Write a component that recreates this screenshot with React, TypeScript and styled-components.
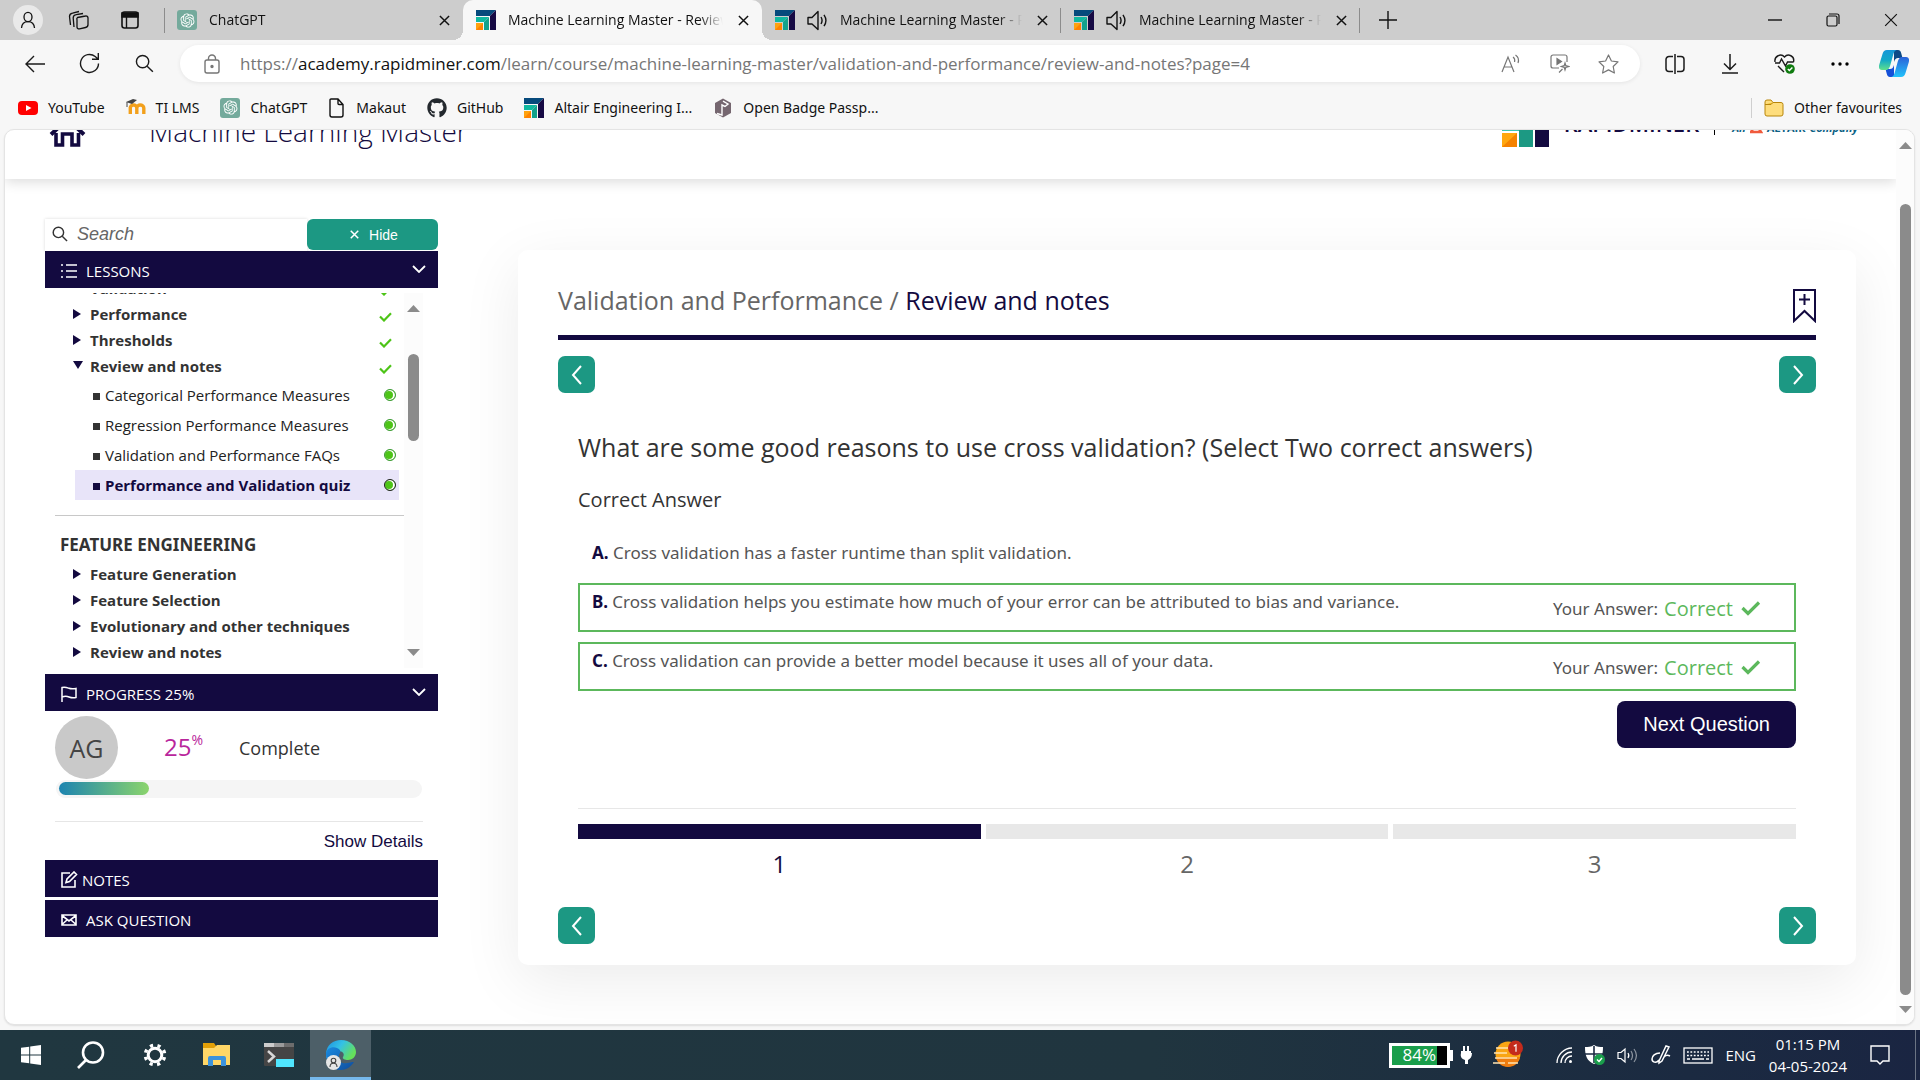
import React from 'react';
import styled, { createGlobalStyle, css } from 'styled-components';
import { RiOpenaiFill } from 'react-icons/ri';
import { FaGithub } from 'react-icons/fa';

const navy = '#130a40';
const teal = '#1c9883';
const sans = '"Open Sans", "Noto Sans", sans-serif';
const noto = '"Noto Sans", "Open Sans", sans-serif';
const arial = '"Liberation Sans", Arial, sans-serif';

const Global = createGlobalStyle`
  *, *::before, *::after { box-sizing: border-box; }
  body { margin: 0; overflow: hidden; font-family: ${sans}; color: #333; }
  button { border: 0; padding: 0; background: none; font: inherit; color: inherit; cursor: pointer; }
  a { color: inherit; text-decoration: none; }
  h1, h2, h3, p, ul, ol { margin: 0; padding: 0; font-weight: 400; }
  ul, ol { list-style: none; }
  svg { display: block; flex: none; }
`;

const Screen = styled.div`
  display: flex;
  flex-direction: column;
  height: 100vh;
  background: #f7f7f7;
`;

/* ---------- Browser chrome ---------- */

const TabStrip = styled.header`
  display: flex;
  height: 40px;
  background: #cdcdcd;
  color: #111;
  font-size: 14px;
`;
const StripTools = styled.div`
  display: flex;
  align-items: center;
  width: 164px;
  padding-left: 13px;
  gap: 23px;
`;
const ProfileButton = styled.button`
  display: grid;
  place-items: center;
  width: 30px;
  height: 30px;
  border-radius: 50%;
  background: #e9e9e9;
`;
const IconButton = styled.button`
  display: grid;
  place-items: center;
`;
const StripIcon = styled(IconButton)`
  width: 24px;
  height: 30px;
  & + & { margin-left: 5px; }
`;
const Tab = styled.div<{ $active?: boolean; $line?: 'left' | 'right' }>`
  position: relative;
  display: flex;
  align-items: center;
  flex: 0 1 299px;
  min-width: 0;
  padding: 0 9px 0 13px;
  gap: 12px;
  ${p => p.$active && css`
    background: #f7f7f7;
    border-radius: 10px 10px 0 0;
    &::before, &::after {
      content: '';
      position: absolute;
      bottom: 0;
      width: 10px;
      height: 10px;
    }
    &::before { left: -10px; background: radial-gradient(circle at 0 0, transparent 10px, #f7f7f7 10px); }
    &::after { right: -10px; background: radial-gradient(circle at 100% 0, transparent 10px, #f7f7f7 10px); }
  `}
  ${p => p.$line && css`
    &::before {
      content: '';
      position: absolute;
      ${p.$line}: 0;
      top: 8px;
      height: 25px;
      border-left: 1px solid #8c8c8c;
    }
  `}
`;
const TabTitle = styled.span`
  flex: 1;
  min-width: 0;
  overflow: hidden;
  white-space: nowrap;
  line-height: 24px;
  mask-image: linear-gradient(to right, #000 calc(100% - 28px), transparent calc(100% - 4px));
`;
const TabClose = styled(IconButton)`
  width: 20px;
  height: 20px;
  margin-left: -6px;
`;
const NewTab = styled(IconButton)`
  width: 55px;
`;
const WindowControls = styled.div`
  display: flex;
  margin-left: auto;
  button { width: 58px; }
`;

const Toolbar = styled.nav`
  display: flex;
  align-items: center;
  height: 48px;
  padding: 0 0 1px 7px;
  color: #1b1b1b;
`;
const ToolButton = styled(IconButton)`
  width: 55px;
  height: 37px;
  color: #1b1b1b;
`;
const CopilotButton = styled(ToolButton)`
  width: 53px;
`;
const AddressBar = styled.div`
  display: flex;
  align-items: center;
  flex: 1;
  height: 37px;
  margin: 0 7px 0 8px;
  padding: 0 7px 0 23px;
  border-radius: 19px;
  background: #fff;
  box-shadow: 0 1px 4px rgba(0, 0, 0, 0.08);
  color: #767676;
`;
const Url = styled.a`
  flex: 1;
  padding-left: 18px;
  font-size: 17px;
  line-height: 24px;
  white-space: nowrap;
  b { font-weight: 400; color: #111; }
`;
const AddressButton = styled(IconButton)`
  width: 49px;
  height: 37px;
`;

const Favourites = styled.nav`
  display: flex;
  align-items: center;
  height: 41px;
  padding: 0 18px 2px;
  gap: 21px;
  color: #111;
  font-family: ${noto};
  font-size: 14px;
  line-height: 20px;
`;
const Favourite = styled.a`
  display: flex;
  align-items: center;
  gap: 10px;
  white-space: nowrap;
`;
const OtherFavourites = styled(Favourite)`
  margin-left: auto;
  padding-left: 12px;
  border-left: 1px solid #cfcfcf;
`;

/* ---------- Web page ---------- */

const PageFrame = styled.div`
  display: flex;
  flex: 1;
  min-height: 0;
  margin: 0 5px 5px 4px;
  overflow: hidden;
  border: 1px solid #e4e4e4;
  border-radius: 10px;
  background: #fff;
  box-shadow: 0 1px 2px rgba(0, 0, 0, 0.1);
`;
const Page = styled.div`
  flex: 1;
  min-width: 0;
`;
const PageHeader = styled.div`
  display: flex;
  align-items: flex-end;
  height: 49px;
  padding: 0 38px 32px 44px;
  box-shadow: 0 3px 12px rgba(0, 0, 0, 0.14);
  color: ${navy};
`;
const CourseTitle = styled.h1`
  margin-left: 63px;
  font-size: 28px;
  font-weight: 300;
  line-height: 32px;
`;
const Brand = styled.a`
  display: flex;
  align-items: flex-end;
  margin-left: auto;
`;
const BrandName = styled.span`
  margin: 0 17px 12px 15px;
  padding-right: 15px;
  border-right: 1px solid #000;
  font-size: 22px;
  font-weight: 600;
  line-height: 24px;
`;
const BrandTag = styled.span`
  display: flex;
  align-items: center;
  gap: 4px;
  margin-bottom: 8px;
  color: #0d6285;
  font-size: 11px;
  font-weight: 700;
  line-height: 22px;
`;
const Columns = styled.div`
  display: flex;
  align-items: flex-start;
  gap: 80px;
  padding: 40px;
`;

/* Sidebar */

const Sidebar = styled.aside`
  flex: 0 0 393px;
`;
const SearchRow = styled.form`
  display: flex;
  height: 32px;
`;
const SearchBox = styled.label`
  display: flex;
  align-items: center;
  flex: 1;
  min-width: 0;
  gap: 9px;
  padding: 0 7px 2px;
  box-shadow: 0 0 3px rgba(0, 0, 0, 0.15);
`;
const SearchInput = styled.input`
  width: 100%;
  min-width: 0;
  border: 0;
  outline: 0;
  padding: 0;
  background: none;
  font: italic 18px/24px ${arial};
  &::placeholder { color: #666; opacity: 1; }
`;
const HideButton = styled.button`
  display: flex;
  align-items: center;
  justify-content: center;
  gap: 10px;
  width: 131px;
  height: 31px;
  padding-left: 3px;
  border-radius: 6px;
  background: ${teal};
  color: #fff;
  font: 14px/20px ${arial};
`;
const PanelBar = styled.button<{ $gap?: number }>`
  display: flex;
  align-items: center;
  gap: ${p => p.$gap ?? 9}px;
  width: 100%;
  height: 37px;
  padding: 2px 12px 0 16px;
  background: ${navy};
  color: #fff;
  font-size: 15px;
  line-height: 24px;
  & + & { margin-top: 3px; }
`;
const BarChevron = styled.span`
  margin-left: auto;
  padding-bottom: 4px;
`;
const LessonScroller = styled.div`
  display: flex;
  height: 375px;
  margin: 5px 0 6px;
  padding-right: 15px;
  overflow: hidden;
`;
const LessonList = styled.div`
  flex: 1;
  margin-top: -18px;
`;
const Topic = styled.a`
  display: flex;
  align-items: center;
  height: 26px;
  padding: 0 12px 0 28px;
  font-size: 15px;
  font-weight: 700;
  line-height: 26px;
`;
const TopicArrow = styled.span`
  width: 17px;
`;
const TopicCheck = styled.span`
  margin-left: auto;
  padding-top: 5px;
`;
const SubList = styled.ul`
  padding: 1px 5px 15px 30px;
`;
const SubItem = styled.a<{ $current?: boolean }>`
  display: flex;
  align-items: center;
  height: 30px;
  padding: 0 3px 0 18px;
  gap: 5px;
  background: ${p => (p.$current ? '#e8e4f9' : 'transparent')};
  color: ${p => (p.$current ? navy : '#222')};
  font-size: 15px;
  font-weight: ${p => (p.$current ? 700 : 400)};
  line-height: 30px;
  white-space: nowrap;
  &::before {
    content: '';
    width: 7px;
    height: 7px;
    margin-top: 2px;
    background: ${p => (p.$current ? navy : '#333')};
  }
`;
const DoneDot = styled.span<{ $dark?: boolean }>`
  width: 12px;
  height: 12px;
  margin-left: auto;
  border: 1px solid ${p => (p.$dark ? '#222' : '#3f9a3a')};
  border-radius: 50%;
  background: #4dc417;
  box-shadow: inset -1px 0 0 1px #fff;
`;
const SectionTitle = styled.h2`
  margin-left: 10px;
  padding: 15px 0 2px 5px;
  border-top: 1px solid #c8c8c8;
  font-family: ${noto};
  font-size: 17px;
  font-weight: 700;
  line-height: 28px;
`;
const ProgressPanel = styled.section`
  padding: 5px 15px 6px 10px;
`;
const ProgressSummary = styled.div`
  display: flex;
  align-items: center;
  color: #333;
  font-size: 18px;
`;
const Avatar = styled.span`
  display: grid;
  place-items: center;
  width: 63px;
  height: 63px;
  margin-right: 46px;
  border-radius: 50%;
  background: #c9c9c9;
  color: #444;
  font-size: 25px;
`;
const Percent = styled.span`
  display: flex;
  width: 75px;
  padding-bottom: 2px;
  color: #b9269c;
  font-size: 24px;
  line-height: 32px;
  sup { font-size: 14px; line-height: 18px; vertical-align: top; }
`;
const ProgressTrack = styled.div`
  height: 18px;
  margin: 1px 1px 23px;
  padding: 2px 3px;
  border-radius: 9px;
  background: #f5f5f5;
`;
const ProgressFill = styled.div`
  height: 13px;
  border-radius: 7px;
  background: linear-gradient(to right, #1d84b0, #8bd46c);
`;
const DetailsRow = styled.div`
  display: flex;
  justify-content: flex-end;
  padding-top: 8px;
  border-top: 1px solid #e6e6e6;
  button { color: ${navy}; font: 17px/24px ${arial}; }
`;

/* Lesson card */

const Card = styled.main`
  flex: 1;
  min-width: 0;
  margin-top: 31px;
  padding: 32px 40px 21px;
  border-radius: 10px;
  background: #fff;
  box-shadow: 0 16px 60px rgba(0, 0, 0, 0.08);
`;
const CardHeader = styled.div`
  display: flex;
  align-items: flex-end;
  justify-content: space-between;
  height: 58px;
  padding-bottom: 10px;
  border-bottom: 5px solid ${navy};
`;
const Crumbs = styled.h2`
  align-self: flex-start;
  color: #666;
  font-size: 25px;
  line-height: 36px;
  b { color: ${navy}; font-weight: 400; }
`;
const BookmarkButton = styled(IconButton)`
  height: 36px;
  align-items: start;
`;
const PagerRow = styled.div`
  display: flex;
  justify-content: space-between;
  margin-top: 16px;
`;
const PagerButton = styled.button`
  display: grid;
  place-items: center;
  width: 37px;
  height: 37px;
  border-radius: 7px;
  background: ${teal};
  color: #fff;
`;
const Quiz = styled.section`
  padding: 36px 20px 11px;
`;
const Question = styled.h3`
  font-size: 25px;
  line-height: 36px;
`;
const AnswerLabel = styled.p`
  margin: 21px 0 20px;
  font-size: 20px;
  line-height: 28px;
`;
const Option = styled.li<{ $correct?: boolean }>`
  display: flex;
  justify-content: space-between;
  height: 49px;
  padding: 5px 33px 0 12px;
  border: 2px solid ${p => (p.$correct ? '#5cb85c' : 'transparent')};
  color: #555;
  font-family: ${noto};
  font-size: 17px;
  line-height: 24px;
  & + & { margin-bottom: 10px; }
  b { color: ${navy}; }
`;
const Verdict = styled.span`
  display: flex;
  align-items: center;
  gap: 6px;
  padding-bottom: 3px;
  em { color: #5cb85c; font-family: ${sans}; font-size: 20px; font-style: normal; }
  svg { margin-left: 2px; }
`;
const NextRow = styled.div`
  display: flex;
  justify-content: flex-end;
  padding-bottom: 60px;
  border-bottom: 1px solid #e7e7e7;
`;
const NextButton = styled.button`
  height: 47px;
  padding: 0 26px 2px;
  border-radius: 8px;
  background: ${navy};
  color: #fff;
  font: 20px/28px ${arial};
`;
const Steps = styled.ol`
  display: grid;
  grid-template-columns: repeat(3, 1fr);
  gap: 5px;
  margin-top: 15px;
`;
const Step = styled.li<{ $active?: boolean }>`
  color: ${p => (p.$active ? navy : '#666')};
  font-size: 24px;
  line-height: 32px;
  text-align: center;
  &::before {
    content: '';
    display: block;
    height: 15px;
    margin-bottom: 9px;
    background: ${p => (p.$active ? navy : '#e8e8e8')};
  }
`;

/* Scrollbars */

const ScrollRail = styled.div<{ $wide: number }>`
  display: flex;
  flex-direction: column;
  align-items: center;
  width: ${p => p.$wide}px;
  background: #fcfcfc;
`;
const ScrollThumb = styled.div`
  width: 11px;
  border-radius: 6px;
  background: #8b8b8b;
`;
const PageRail = styled(ScrollRail)`
  padding: 12px 0 11px;
  ${ScrollThumb} { flex: 1; margin: 55px 0 11px; }
`;
const LessonRail = styled(ScrollRail)`
  padding: 12px 0;
  ${ScrollThumb} { height: 87px; margin: 42px 0 auto; }
`;

/* ---------- Taskbar ---------- */

const Taskbar = styled.footer`
  display: flex;
  height: 50px;
  background: linear-gradient(to right, #203740 0%, #20353f 60%, #1b2a41 88%, #1a2542 100%);
  color: #fff;
`;
const Apps = styled.div`
  display: flex;
  gap: 1px;
`;
const AppButton = styled.button<{ $active?: boolean }>`
  display: grid;
  place-items: center;
  width: 61px;
  ${p => p.$active && css`
    background: #4d5f68;
    border-bottom: 3px solid #76b9ed;
    padding-top: 3px;
  `}
`;
const Tray = styled.div`
  display: flex;
  align-items: center;
  margin-left: auto;
  padding-right: 5px;
`;
const Battery = styled.div`
  display: flex;
  align-items: center;
  width: 61px;
  height: 25px;
  padding-left: 10px;
  border: 3px solid #fff;
  background: linear-gradient(to right, #1a9e4b 45px, #000 45px);
  font-size: 17px;
  line-height: 18px;
`;
const BatteryTip = styled.span`
  width: 3px;
  height: 11px;
  margin-right: 7px;
  background: #fff;
`;
const WeatherButton = styled(IconButton)`
  margin: 0 33px 4px 21px;
`;
const TrayIcons = styled.div`
  display: flex;
  align-items: center;
  gap: 12px;
`;
const Language = styled.button`
  margin: 0 7px 0 12px;
  font-size: 15px;
`;
const Clock = styled.time`
  width: 90px;
  font-size: 15px;
  line-height: 22px;
  text-align: center;
  white-space: nowrap;
`;
const Notifications = styled(IconButton)`
  width: 54px;
  height: 50px;
  margin-right: 8px;
`;
const ShowDesktop = styled.button`
  width: 5px;
  height: 50px;
  margin-right: -5px;
  border-left: 1px solid #6b7484;
`;

/* ---------- Drawings ---------- */

const stroke = { fill: 'none', stroke: 'currentColor', strokeWidth: 1.4 };

const Cross = ({ size = 12, w = 1.4 }: { size?: number; w?: number }) => (
  <svg width={size} height={size} viewBox="0 0 12 12" {...stroke} strokeWidth={w}><path d="M1 1l10 10M11 1L1 11" /></svg>
);
const Person = ({ size = 18 }: { size?: number }) => (
  <svg width={size} height={size} viewBox="0 0 18 18" {...stroke} strokeWidth={1.3}>
    <ellipse cx="9" cy="6" rx="4" ry="4.6" /><path d="M2.5 17c.3-4 3-6.400 6.500-6.400s6.200 2.400 6.500 6.400" />
  </svg>
);
const RapidIcon = () => (
  <svg width="20" height="20" viewBox="0 0 20 20">
    <path d="M0 0h20L14 6H0z" fill="#064a7c" /><path d="M20 0v20h-6V6z" fill="#160a44" />
    <path d="M0 7h13l-5 5H0z" fill="#10b8a0" /><path d="M13 7v13H8v-8z" fill="#12a28c" />
    <path d="M0 13h7v7H0z" fill="#ffa20f" /><path d="M7 13v7H0z" fill="#ff8200" />
  </svg>
);
const GptBadge = styled.span`
  display: grid;
  place-items: center;
  width: 20px;
  height: 20px;
  border-radius: 3px;
  background: #74aa9c;
  color: #fff;
`;
const GptIcon = () => <GptBadge><RiOpenaiFill size={17} /></GptBadge>;
const Speaker = () => (
  <svg width="21" height="21" viewBox="0 0 21 21" {...stroke}>
    <path d="M1 7.500h4L11 1.500v18L5 14H1z" strokeLinejoin="round" /><path d="M14 7c1.200 2 1.200 5 0 7M17 4.800c2.300 3.400 2.300 8 0 11.400" />
  </svg>
);
const Magnifier = ({ size = 20, w = 1.5 }: { size?: number; w?: number }) => (
  <svg width={size} height={size} viewBox="0 0 20 20" {...stroke} strokeWidth={w}><circle cx="8" cy="8" r="6.500" /><path d="M12.800 12.800l6 6" /></svg>
);
const ArrowHead = ({ up }: { up?: boolean }) => (
  <svg width="13" height="7" viewBox="0 0 13 7" fill="#8b8b8b"><path d={up ? 'M0 7L6.500 0 13 7z' : 'M0 0h13L6.500 7z'} /></svg>
);
const Triangle = ({ open }: { open?: boolean }) => (
  <svg width="10" height="10" viewBox="0 0 10 10" fill={navy}><path d={open ? 'M0 0h10L5 8z' : 'M0 0l8 5-8 5z'} /></svg>
);
const Tick = () => (
  <svg width="13" height="10" viewBox="0 0 13 10" fill="none" stroke="#4dc417" strokeWidth="2.200"><path d="M1 4.500L5 8.500 12 1.200" /></svg>
);
const BoldTick = () => (
  <svg width="20" height="15" viewBox="0 0 20 15" fill="none" stroke="#5cb85c" strokeWidth="3.200"><path d="M1.500 7L7 12.500 18 1.500" /></svg>
);
const Chevron = ({ dir }: { dir: 'left' | 'right' | 'down' }) => {
  const d = { left: 'M12 1L4 10l8 9', right: 'M4 1l8 9-8 9', down: 'M1 1l6 6 6-6' }[dir];
  return dir === 'down'
    ? <svg width="14" height="8" viewBox="0 0 14 8" {...stroke} strokeWidth={1.800}><path d={d} /></svg>
    : <svg width="16" height="20" viewBox="0 0 16 20" {...stroke} strokeWidth={2}><path d={d} /></svg>;
};

/* ---------- Data ---------- */

const favourites: { label: string; icon: React.ReactNode }[] = [
  { label: 'YouTube', icon: <svg width="20" height="20" viewBox="0 0 20 20"><rect y="3" width="20" height="14" rx="4" fill="#f00" /><path d="M8 7l5.500 3L8 13z" fill="#fff" /></svg> },
  { label: 'TI LMS', icon: <svg width="20" height="20" viewBox="0 0 20 20"><path d="M3 16V9M3 10c0-4 6.500-4 6.500 0v6M9.500 10c0-4 7-4 7 0v6" transform="translate(1.300 0)" fill="none" stroke="#f2a01c" strokeWidth="3.400" /><path d="M0 4l7-3 4 1-5 4z" fill="#444" /><path d="M1 4v5" stroke="#444" /></svg> },
  { label: 'ChatGPT', icon: <GptIcon /> },
  { label: 'Makaut', icon: <svg width="18" height="20" viewBox="0 0 18 20" {...stroke}><path d="M3 1h7l5 5.500V17a2 2 0 0 1-2 2H4a2 2 0 0 1-2-2V2a1 1 0 0 1 1-1zM10 1v4.500a1 1 0 0 0 1 1h4" /></svg> },
  { label: 'GitHub', icon: <FaGithub size={20} color="#24292e" /> },
  { label: 'Altair Engineering I...', icon: <RapidIcon /> },
  { label: 'Open Badge Passp...', icon: <svg width="20" height="20" viewBox="0 0 20 20"><path d="M10 .5l8 4.500v10l-8 4.500L2 15V5z" fill="#75666f" /><path d="M4 15.500l5 1.500V7l3 1.500 3-2.500-5-2.800" fill="none" stroke="#fff" strokeWidth="1.400" /></svg> },
];

const doneTopics = ['Validation', 'Performance', 'Thresholds', 'Review and notes'];
const lessons = ['Categorical Performance Measures', 'Regression Performance Measures', 'Validation and Performance FAQs', 'Performance and Validation quiz'];
const nextTopics = ['Feature Generation', 'Feature Selection', 'Evolutionary and other techniques', 'Review and notes'];
const options = [
  { key: 'A.', text: 'Cross validation has a faster runtime than split validation.', correct: false },
  { key: 'B.', text: 'Cross validation helps you estimate how much of your error can be attributed to bias and variance.', correct: true },
  { key: 'C.', text: 'Cross validation can provide a better model because it uses all of your data.', correct: true },
];
const progress = 25;

/* ---------- Sections ---------- */

const BrowserTab = ({ title, icon, active, audio, line }: { title: string; icon: React.ReactNode; active?: boolean; audio?: boolean; line?: 'left' | 'right' }) => (
  <Tab $active={active} $line={line}>
    {icon}{audio && <Speaker />}
    <TabTitle>{title}</TabTitle>
    <TabClose aria-label="Close tab"><Cross size={11} w={1.600} /></TabClose>
  </Tab>
);

const BrowserChrome = () => (
  <>
    <TabStrip>
      <StripTools>
        <ProfileButton aria-label="Profile"><Person /></ProfileButton>
        <StripIcon aria-label="Workspaces">
          <svg width="22" height="20" viewBox="0 0 22 20" {...stroke} strokeWidth={1.300}>
            <path d="M10.500 7.500l8-1.500a2 2 0 0 1 2.500 2v6.500a3 3 0 0 1-2.500 3l-6 1.400a2 2 0 0 1-2.500-2v-7a2 2 0 0 1 .5-2.400z" />
            <path d="M7 17l-.8-9c0-2 1-3 3-3.300L16 3.500M3.500 15L2.500 6.500c0-2 1-3 3-3.400L12 1.500" />
          </svg>
        </StripIcon>
        <StripIcon aria-label="Vertical tabs">
          <svg width="18" height="18" viewBox="0 0 18 18"><rect x="1" y="1" width="16" height="16" rx="2.500" {...stroke} strokeWidth={1.600} /><path d="M1 2h16v4H1zM5.500 6v11" fill="#111" stroke="#111" strokeWidth="1.400" /></svg>
        </StripIcon>
      </StripTools>
      <BrowserTab title="ChatGPT" icon={<GptIcon />} line="left" />
      <BrowserTab title="Machine Learning Master - Review and notes" icon={<RapidIcon />} active />
      <BrowserTab title="Machine Learning Master - Review" icon={<RapidIcon />} audio line="right" />
      <BrowserTab title="Machine Learning Master - Review" icon={<RapidIcon />} audio line="right" />
      <NewTab aria-label="New tab"><svg width="18" height="18" viewBox="0 0 18 18" {...stroke}><path d="M9 0v18M0 9h18" /></svg></NewTab>
      <WindowControls>
        <IconButton aria-label="Minimise"><svg width="14" height="14" viewBox="0 0 14 14" {...stroke}><path d="M0 7h14" /></svg></IconButton>
        <IconButton aria-label="Restore"><svg width="14" height="14" viewBox="0 0 14 14" {...stroke} strokeWidth={1.200}><rect x="1" y="3" width="10" height="10" rx="1.500" /><path d="M3 1h8a2 2 0 0 1 2 2v8" /></svg></IconButton>
        <IconButton aria-label="Close"><Cross size={14} w={1} /></IconButton>
      </WindowControls>
    </TabStrip>
    <Toolbar>
      <ToolButton aria-label="Back"><svg width="20" height="18" viewBox="0 0 20 18" {...stroke}><path d="M20 9H1M9 1L1 9l8 8" /></svg></ToolButton>
      <ToolButton aria-label="Refresh"><svg width="21" height="21" viewBox="0 0 21 21" {...stroke}><path d="M19.500 10.500a9 9 0 1 1-3.300-7L19 6M19.300 0v6.200H13" /></svg></ToolButton>
      <ToolButton aria-label="Search"><Magnifier size={19} /></ToolButton>
      <AddressBar>
        <svg width="19" height="20" viewBox="0 0 19 20" {...stroke}><rect x="2" y="6" width="14" height="13" rx="2" /><path d="M5.500 6V4.500a3.500 3.500 0 0 1 7 0V6" /><circle cx="9" cy="12.500" r="1" fill="currentColor" /></svg>
        <Url href="#">https://<b>academy.rapidminer.com</b>/learn/course/machine-learning-master/validation-and-performance/review-and-notes?page=4</Url>
        <AddressButton aria-label="Read aloud"><svg width="20" height="19" viewBox="0 0 20 19" {...stroke} strokeWidth={1.200}><path d="M1 18L7 3l6 15M3 13h8M12 3c1.500 1 2 3 1.600 5M14.500 1c3 2 3.500 5 2.500 8" /></svg></AddressButton>
        <AddressButton aria-label="Enhance video"><svg width="20" height="19" viewBox="0 0 20 19" {...stroke} strokeWidth={1.200}><path d="M17 8V3a2 2 0 0 0-2-2H3a2 2 0 0 0-2 2v9a2 2 0 0 0 2 2h6" /><path d="M7 4.500v6l4.500-3z" fill="currentColor" /><path d="M15 9l.8 2.700 2.700.8-2.700.8L15 16l-.8-2.700-2.700-.8 2.700-.8zM12.500 15L9 18.500" /></svg></AddressButton>
        <AddressButton aria-label="Add to favourites"><svg width="21" height="20" viewBox="0 0 21 20" {...stroke} strokeWidth={1.200} strokeLinejoin="round"><path d="M10.500 1l2.900 6 6.600.9-4.800 4.600 1.200 6.500-5.900-3.100L4.600 19l1.200-6.500L1 7.900 7.600 7z" /></svg></AddressButton>
      </AddressBar>
      <ToolButton aria-label="Split screen"><svg width="20" height="20" viewBox="0 0 20 20" {...stroke} strokeWidth={1.500}><path d="M8 2.500H4a3 3 0 0 0-3 3v9a3 3 0 0 0 3 3h4M12 2.500h4a3 3 0 0 1 3 3v9a3 3 0 0 1-3 3h-4M10 0v20" /></svg></ToolButton>
      <ToolButton aria-label="Downloads"><svg width="16" height="20" viewBox="0 0 16 20" {...stroke} strokeWidth={1.500}><path d="M8 0v15M2 9.500l6 6 6-6M0 19h16" /></svg></ToolButton>
      <ToolButton aria-label="Browser essentials"><svg width="21" height="21" viewBox="0 0 21 21" {...stroke}><path d="M1 9C0 3 7 0 10.500 4 14 0 21 3 19.500 9M1 10h4.500l2-4 4 7 2-4h6M4 13l6 6" /><circle cx="16" cy="16" r="4.800" fill="#0f7b0f" stroke="none" /><path d="M13.800 16l1.600 1.600 3-3" stroke="#fff" /></svg></ToolButton>
      <ToolButton aria-label="Settings and more"><svg width="18" height="4" viewBox="0 0 18 4"><circle cx="2" cy="2" r="1.700" /><circle cx="9" cy="2" r="1.700" /><circle cx="16" cy="2" r="1.700" /></svg></ToolButton>
      <CopilotButton aria-label="Copilot">
        <svg width="30" height="27" viewBox="0 0 30 27">
          <defs>
            <linearGradient id="copA" x1="0" y1="0" x2="0" y2="1"><stop offset="0" stopColor="#1596d8" /><stop offset=".5" stopColor="#12a8c8" /><stop offset="1" stopColor="#5fe08c" /></linearGradient>
            <linearGradient id="copB" x1="0" y1="0" x2="0" y2="1"><stop offset="0" stopColor="#2a62d8" /><stop offset="1" stopColor="#22c3fb" /></linearGradient>
          </defs>
          <path d="M15 0h4c2 0 2.800 1.500 3.300 3.500L23.500 8H19c-2 0-3 1-4 4z" fill="#0d4a86" />
          <path d="M6.500 19H11c2 0 3-1 4-4v12h-4c-2 0-2.800-1.500-3.300-3.500z" fill="#1550d8" />
          <path d="M8 0h9.500c-2 .8-2.700 2.500-3.400 5L11.500 14.500C10.700 17.500 9.500 20 7 20H3c-3 0-3.500-2.500-2.700-5.500L3.500 4C4.300 1.500 5.500 0 8 0z" fill="url(#copA)" />
          <path d="M22 27h-9.500c2-.8 2.700-2.500 3.400-5l2.600-9.500C19.300 9.500 20.500 7 23 7h4c3 0 3.500 2.500 2.700 5.500L26.500 23c-.8 2.500-2 4-4.500 4z" fill="url(#copB)" />
        </svg>
      </CopilotButton>
    </Toolbar>
    <Favourites>
      {favourites.map(f => <Favourite href="#" key={f.label}>{f.icon}{f.label}</Favourite>)}
      <OtherFavourites href="#">
        <svg width="20" height="18" viewBox="0 0 20 18"><path d="M1 3a2 2 0 0 1 2-2h4l2 2.500h8a2 2 0 0 1 2 2V15a2 2 0 0 1-2 2H3a2 2 0 0 1-2-2z" fill="#fedd7c" stroke="#b8860b" /><path d="M1 5.500h6l2-2" fill="#e8b820" stroke="#b8860b" /></svg>
        Other favourites
      </OtherFavourites>
    </Favourites>
  </>
);

const LessonSidebar = () => (
  <Sidebar>
    <SearchRow>
      <SearchBox><Magnifier size={16} w={1.800} /><SearchInput type="search" placeholder="Search" aria-label="Search" /></SearchBox>
      <HideButton type="button"><Cross size={9} w={2} />Hide</HideButton>
    </SearchRow>
    <PanelBar>
      <svg width="16" height="14" viewBox="0 0 16 14" {...stroke} strokeWidth={1.500}><path d="M5 1h11M5 7h11M5 13h11M0 1h2M0 7h2M0 13h2" /></svg>
      LESSONS<BarChevron><Chevron dir="down" /></BarChevron>
    </PanelBar>
    <LessonScroller>
      <LessonList>
        {doneTopics.map((t, i) => (
          <Topic href="#" key={t}><TopicArrow><Triangle open={i === 3} /></TopicArrow>{t}<TopicCheck><Tick /></TopicCheck></Topic>
        ))}
        <SubList>
          {lessons.map((l, i) => (
            <li key={l}><SubItem href="#" $current={i === 3}>{l}<DoneDot $dark={i === 3} /></SubItem></li>
          ))}
        </SubList>
        <SectionTitle>FEATURE ENGINEERING</SectionTitle>
        {nextTopics.map(t => <Topic href="#" key={t}><TopicArrow><Triangle /></TopicArrow>{t}</Topic>)}
      </LessonList>
      <LessonRail $wide={19}><ArrowHead up /><ScrollThumb /><ArrowHead /></LessonRail>
    </LessonScroller>
    <PanelBar>
      <svg width="16" height="16" viewBox="0 0 16 16" {...stroke} strokeWidth={1.500}><path d="M1 16V1.500c3-1 5 0 7 .8s4 .7 7 .2v9c-3 .8-5 .3-7-.5s-4-1-7 0" /></svg>
      PROGRESS {progress}%<BarChevron><Chevron dir="down" /></BarChevron>
    </PanelBar>
    <ProgressPanel>
      <ProgressSummary><Avatar>AG</Avatar><Percent>{progress}<sup>%</sup></Percent>Complete</ProgressSummary>
      <ProgressTrack><ProgressFill style={{ width: `${progress}%` }} /></ProgressTrack>
      <DetailsRow><button>Show Details</button></DetailsRow>
    </ProgressPanel>
    <PanelBar $gap={4}>
      <svg width="17" height="17" viewBox="0 0 17 17" {...stroke} strokeWidth={1.600}><path d="M9 2H1v14h13V9M5 11.500l1-3.500 7-7 2.500 2.500-7 7z" /></svg>
      NOTES
    </PanelBar>
    <PanelBar>
      <svg width="16" height="12" viewBox="0 0 16 12" {...stroke} strokeWidth={1.600}><path d="M1 1h14v10H1zM1 1.500l7 5.500 7-5.500M1 10.500L6 6M15 10.500L10 6" /></svg>
      ASK QUESTION
    </PanelBar>
  </Sidebar>
);

const Pager = () => (
  <PagerRow>
    <PagerButton aria-label="Previous page"><Chevron dir="left" /></PagerButton>
    <PagerButton aria-label="Next page"><Chevron dir="right" /></PagerButton>
  </PagerRow>
);

const LessonCard = () => (
  <Card>
    <CardHeader>
      <Crumbs>Validation and Performance / <b>Review and notes</b></Crumbs>
      <BookmarkButton aria-label="Bookmark">
        <svg width="23" height="34" viewBox="0 0 23 34" fill="none" stroke={navy} strokeWidth="2"><path d="M1 1h21v31L11.500 22 1 32zM11.500 5v11M6 10.500h11" /></svg>
      </BookmarkButton>
    </CardHeader>
    <Pager />
    <Quiz>
      <Question>What are some good reasons to use cross validation? (Select Two correct answers)</Question>
      <AnswerLabel>Correct Answer</AnswerLabel>
      <ul>
        {options.map(o => (
          <Option key={o.key} $correct={o.correct}>
            <span><b>{o.key}</b> {o.text}</span>
            {o.correct && <Verdict>Your Answer: <em>Correct</em><BoldTick /></Verdict>}
          </Option>
        ))}
      </ul>
      <NextRow><NextButton>Next Question</NextButton></NextRow>
      <Steps>
        {[1, 2, 3].map(n => <Step key={n} $active={n === 1}>{n}</Step>)}
      </Steps>
    </Quiz>
    <Pager />
  </Card>
);

const CoursePage = () => (
  <PageFrame>
    <Page>
      <PageHeader>
        <svg width="37" height="36" viewBox="0 0 37 36" fill="none" stroke={navy} strokeWidth="4"><path d="M2 23.500L18.500 8 35 23.500" /><path d="M7 22v12h6.500V23h9.500v11h6.500V22" strokeWidth="3.600" /></svg>
        <CourseTitle>Machine Learning Master</CourseTitle>
        <Brand href="#">
          <svg width="47" height="48" viewBox="0 0 47 48">
            <path d="M0 30h31v2H0z" fill="#3fc4b0" /><path d="M16 28h15v20H17V32z" fill="#1c9983" />
            <path d="M33 16h14v32H33z" fill={navy} /><path d="M0 34h15v14H0z" fill="#ffa70f" /><path d="M15 34v14H0z" fill="#f58200" />
          </svg>
          <BrandName>RAPIDMINER</BrandName>
          <BrandTag><i>An</i><svg width="13" height="12" viewBox="0 0 13 12" fill="none" stroke="#f05a3c" strokeWidth="2.500"><path d="M1 10L6 2l5 8zM4 6h8" /></svg>ALTAIR <i>Company</i></BrandTag>
        </Brand>
      </PageHeader>
      <Columns><LessonSidebar /><LessonCard /></Columns>
    </Page>
    <PageRail $wide={18}><ArrowHead up /><ScrollThumb /><ArrowHead /></PageRail>
  </PageFrame>
);

const WindowsTaskbar = () => (
  <Taskbar>
    <Apps>
      <AppButton aria-label="Start"><svg width="20" height="20" viewBox="0 0 20 20" fill="#fff"><path d="M0 2.800L8.200 1.700v7.800H0zM9.200 1.500L20 0v9.500H9.200zM0 10.500h8.200v7.800L0 17.200zM9.200 10.500H20V20L9.200 18.500z" /></svg></AppButton>
      <AppButton aria-label="Search"><svg width="31" height="28" viewBox="0 0 31 28" fill="none" stroke="#fff" strokeWidth="2.600"><circle cx="16" cy="11.500" r="10" /><path d="M9 19l-8 8" /></svg></AppButton>
      <AppButton aria-label="Settings"><svg width="24" height="24" viewBox="0 0 24 24" fill="none" stroke="#fff"><circle cx="12" cy="12" r="6.800" strokeWidth="3" /><circle cx="12" cy="12" r="9.700" strokeWidth="3.400" strokeDasharray="3.200 4.420" strokeDashoffset="-2.200" /></svg></AppButton>
      <AppButton aria-label="File Explorer"><svg width="28" height="24" viewBox="0 0 28 24"><path d="M0 0h11l2 3h14v19H0z" fill="#e3a007" /><path d="M0 5h11l3-3h13v20H0z" fill="#ffd767" /><path d="M5 23V15a2 2 0 0 1 2-2h14a2 2 0 0 1 2 2v8h-5v-6h-8v6z" fill="#3c93dc" /></svg></AppButton>
      <AppButton aria-label="Terminal"><svg width="30" height="24" viewBox="0 0 30 24"><rect width="30" height="23" rx="1" fill="#454545" /><path d="M0 0h10v4H0z" fill="#ccc" /><path d="M10 0h10v4H10z" fill="#9b9b9b" /><path d="M20 0h10v4H20z" fill="#6d6d6d" /><path d="M4 8l6 5.500L4 19" fill="none" stroke="#d8d8d8" strokeWidth="2.500" /><path d="M12 16h18v8H12z" fill="#50e6ff" /></svg></AppButton>
      <AppButton aria-label="Microsoft Edge" $active>
        <svg width="30" height="30" viewBox="0 0 30 30">
          <defs>
            <linearGradient id="edgeA" x1="0" y1="0" x2="1" y2=".5"><stop offset="0" stopColor="#1d8fe0" /><stop offset=".5" stopColor="#34c1e6" /><stop offset="1" stopColor="#66e05a" /></linearGradient>
            <linearGradient id="edgeB" x1="0" y1="0" x2="1" y2="1"><stop offset="0" stopColor="#1a8ae0" /><stop offset="1" stopColor="#0f4c9c" /></linearGradient>
          </defs>
          <path d="M0 13C1 5 7 0 15 0c9 0 15 6 15 12 0 5-4 8-8 8-3 0-6-1-5-3 2-3 0-6-5-6-6 0-10 3-12 8z" fill="url(#edgeA)" />
          <path d="M0 14c0-5 6-8 11-6 3 1 4 3 3 5-3 4-1 12 7 10 3-.5 5-1 7-1-3 5-8 8-13 8C6 30 0 23 0 14z" fill="url(#edgeB)" />
          <circle cx="7.500" cy="22.500" r="7.500" fill="#e6e6e6" />
          <g fill="none" stroke="#444" strokeWidth="1.100"><circle cx="7.500" cy="20.500" r="2.300" /><path d="M4 27c0-5 7-5 7 0" /></g>
        </svg>
      </AppButton>
    </Apps>
    <Tray>
      <Battery>84%</Battery><BatteryTip />
      <svg width="12" height="18" viewBox="0 0 12 18" fill="#fff"><path d="M3 0h2v5h2V0h2v5h2v2h1c0 4-2 6-4 7v4H5v-4c-3-1-5-3-4-7V5h2z" /></svg>
      <WeatherButton aria-label="Weather">
        <svg width="30" height="27" viewBox="0 0 30 27">
          <circle cx="15" cy="14" r="12.500" fill="#f9a514" /><path d="M3 17c1 6 6 10 12 10s11-4 12-10z" fill="#ef7d10" />
          <path d="M3 8h12M1 13h13M2 18h22M0 23h12M15 23h10" stroke="#ffe3b0" strokeWidth="1.700" />
          <circle cx="22.500" cy="8" r="7.500" fill="#c42b1c" /><path d="M20.800 6.200L23 4.800v7" fill="none" stroke="#fff" strokeWidth="1.200" />
        </svg>
      </WeatherButton>
      <TrayIcons>
        <svg width="17" height="17" viewBox="0 0 17 17" {...stroke} strokeWidth={1.300}><path d="M1 16C1 8 8 1 16 1M5 16C5 10 10 5 16 5M9 16c0-4 3-7 7-7" /><circle cx="14.500" cy="14.500" r="1.500" fill="#fff" stroke="none" /></svg>
        <svg width="20" height="20" viewBox="0 0 20 20"><path d="M9 0c3 2 6 2 9 2 0 9-2 14-9 17C2 16 0 11 0 2c3 0 6 0 9-2z" fill="#fff" /><path d="M9 1v17M0 9h18" stroke="#1b2a41" strokeWidth="1.600" /><circle cx="14.500" cy="14.500" r="5.500" fill="#1a9e4b" /><path d="M12 14.500l2 2 3-3.500" fill="none" stroke="#fff" strokeWidth="1.400" /></svg>
        <svg width="22" height="17" viewBox="0 0 22 17" {...stroke} strokeWidth={1.200}><path d="M1 5.500h3L8 2v13l-4-3.500H1zM11 6c1 1.500 1 3.500 0 5" /><path d="M14 4c2 3 2 6 0 9M17 2c3 4 3 9 0 13" opacity=".5" /></svg>
        <svg width="20" height="20" viewBox="0 0 20 20" {...stroke} strokeWidth={1.500}><path d="M8 16L15 1l3 1-7 14-3 2zM9 8c-5 0-8 3-8 6s4 5 7 1M13 12c2-2 4-2 6-1" /></svg>
        <svg width="30" height="17" viewBox="0 0 30 17" {...stroke} strokeWidth={1.300}><rect x="1" y="1" width="28" height="15" /><path d="M4 5h22M4 8.500h22" strokeDasharray="1.800 1.600" /><path d="M4 12h3M9 12h12M23 12h3" /></svg>
      </TrayIcons>
      <Language>ENG</Language>
      <Clock>01:15 PM<br />04-05-2024</Clock>
      <Notifications aria-label="Notifications"><svg width="20" height="20" viewBox="0 0 20 20" {...stroke}><path d="M1 1h18v15h-6l-3 3-3-3H1z" /></svg></Notifications>
      <ShowDesktop aria-label="Show desktop" />
    </Tray>
  </Taskbar>
);

export default function App() {
  return (
    <Screen>
      <Global />
      <BrowserChrome />
      <CoursePage />
      <WindowsTaskbar />
    </Screen>
  );
}
